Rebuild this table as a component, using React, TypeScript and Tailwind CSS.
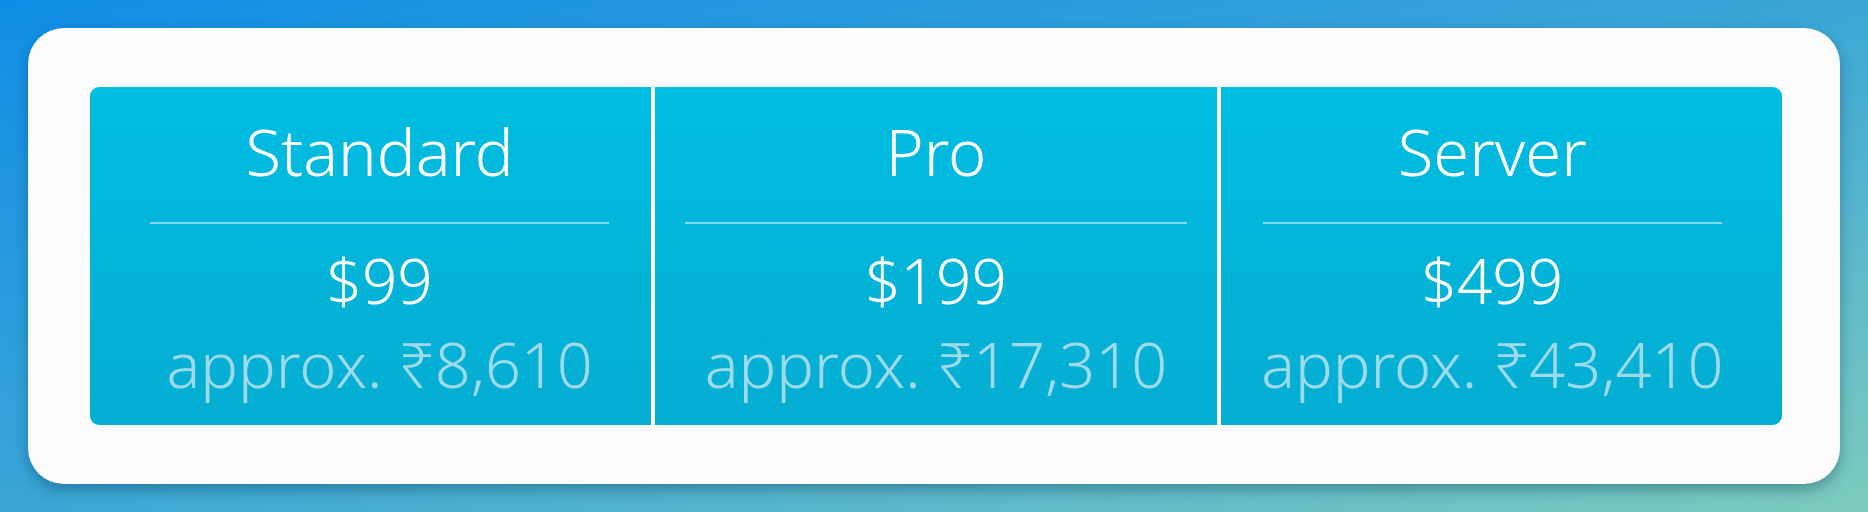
import React from "react";

interface Plan {
  name: string;
  price: string;
  approx: string;
  inset: string;
}

const plans: Plan[] = [
  { name: "Standard", price: "$99", approx: "approx. ₹8,610", inset: "ml-[60px] mr-[42px]" },
  { name: "Pro", price: "$199", approx: "approx. ₹17,310", inset: "ml-[30px] mr-[30px]" },
  { name: "Server", price: "$499", approx: "approx. ₹43,410", inset: "ml-[42px] mr-[60px]" },
];

export default function App() {
  return (
    <div
      className="h-[512px] w-full p-[28px] bg-linear-to-br from-[#0d8de6] via-[#3aa6d6] to-[#7ccbbd]"
      style={{ fontFamily: '"Noto Sans", "Open Sans", sans-serif' }}
    >
      <div className="h-[456px] rounded-[36px] bg-[#fcfcfd] pl-[62px] pr-[58px] pt-[59px] pb-[59px] shadow-[0_6px_14px_rgba(0,50,70,0.35)]">
        <div className="grid h-full grid-cols-3 gap-[4px]">
          {plans.map((plan, i) => (
            <div
              key={plan.name}
              className={
                "bg-linear-to-b from-[#01bde2] to-[#05add1] pt-[32px] " +
                (i === 0 ? "rounded-l-[9px]" : i === 2 ? "rounded-r-[9px]" : "")
              }
            >
              <div className={"flex flex-col items-center text-center font-light " + plan.inset}>
                <div className="text-[65px] leading-none text-white">{plan.name}</div>
                <div className="mt-[38px] h-[2px] w-full bg-white/50" />
                <div className="mt-[25px] text-[62px] leading-none text-white">{plan.price}</div>
                <div className="mt-[21px] text-[63px] leading-none text-[#9fdaea] whitespace-nowrap">
                  {plan.approx}
                </div>
              </div>
            </div>
          ))}
        </div>
      </div>
    </div>
  );
}
